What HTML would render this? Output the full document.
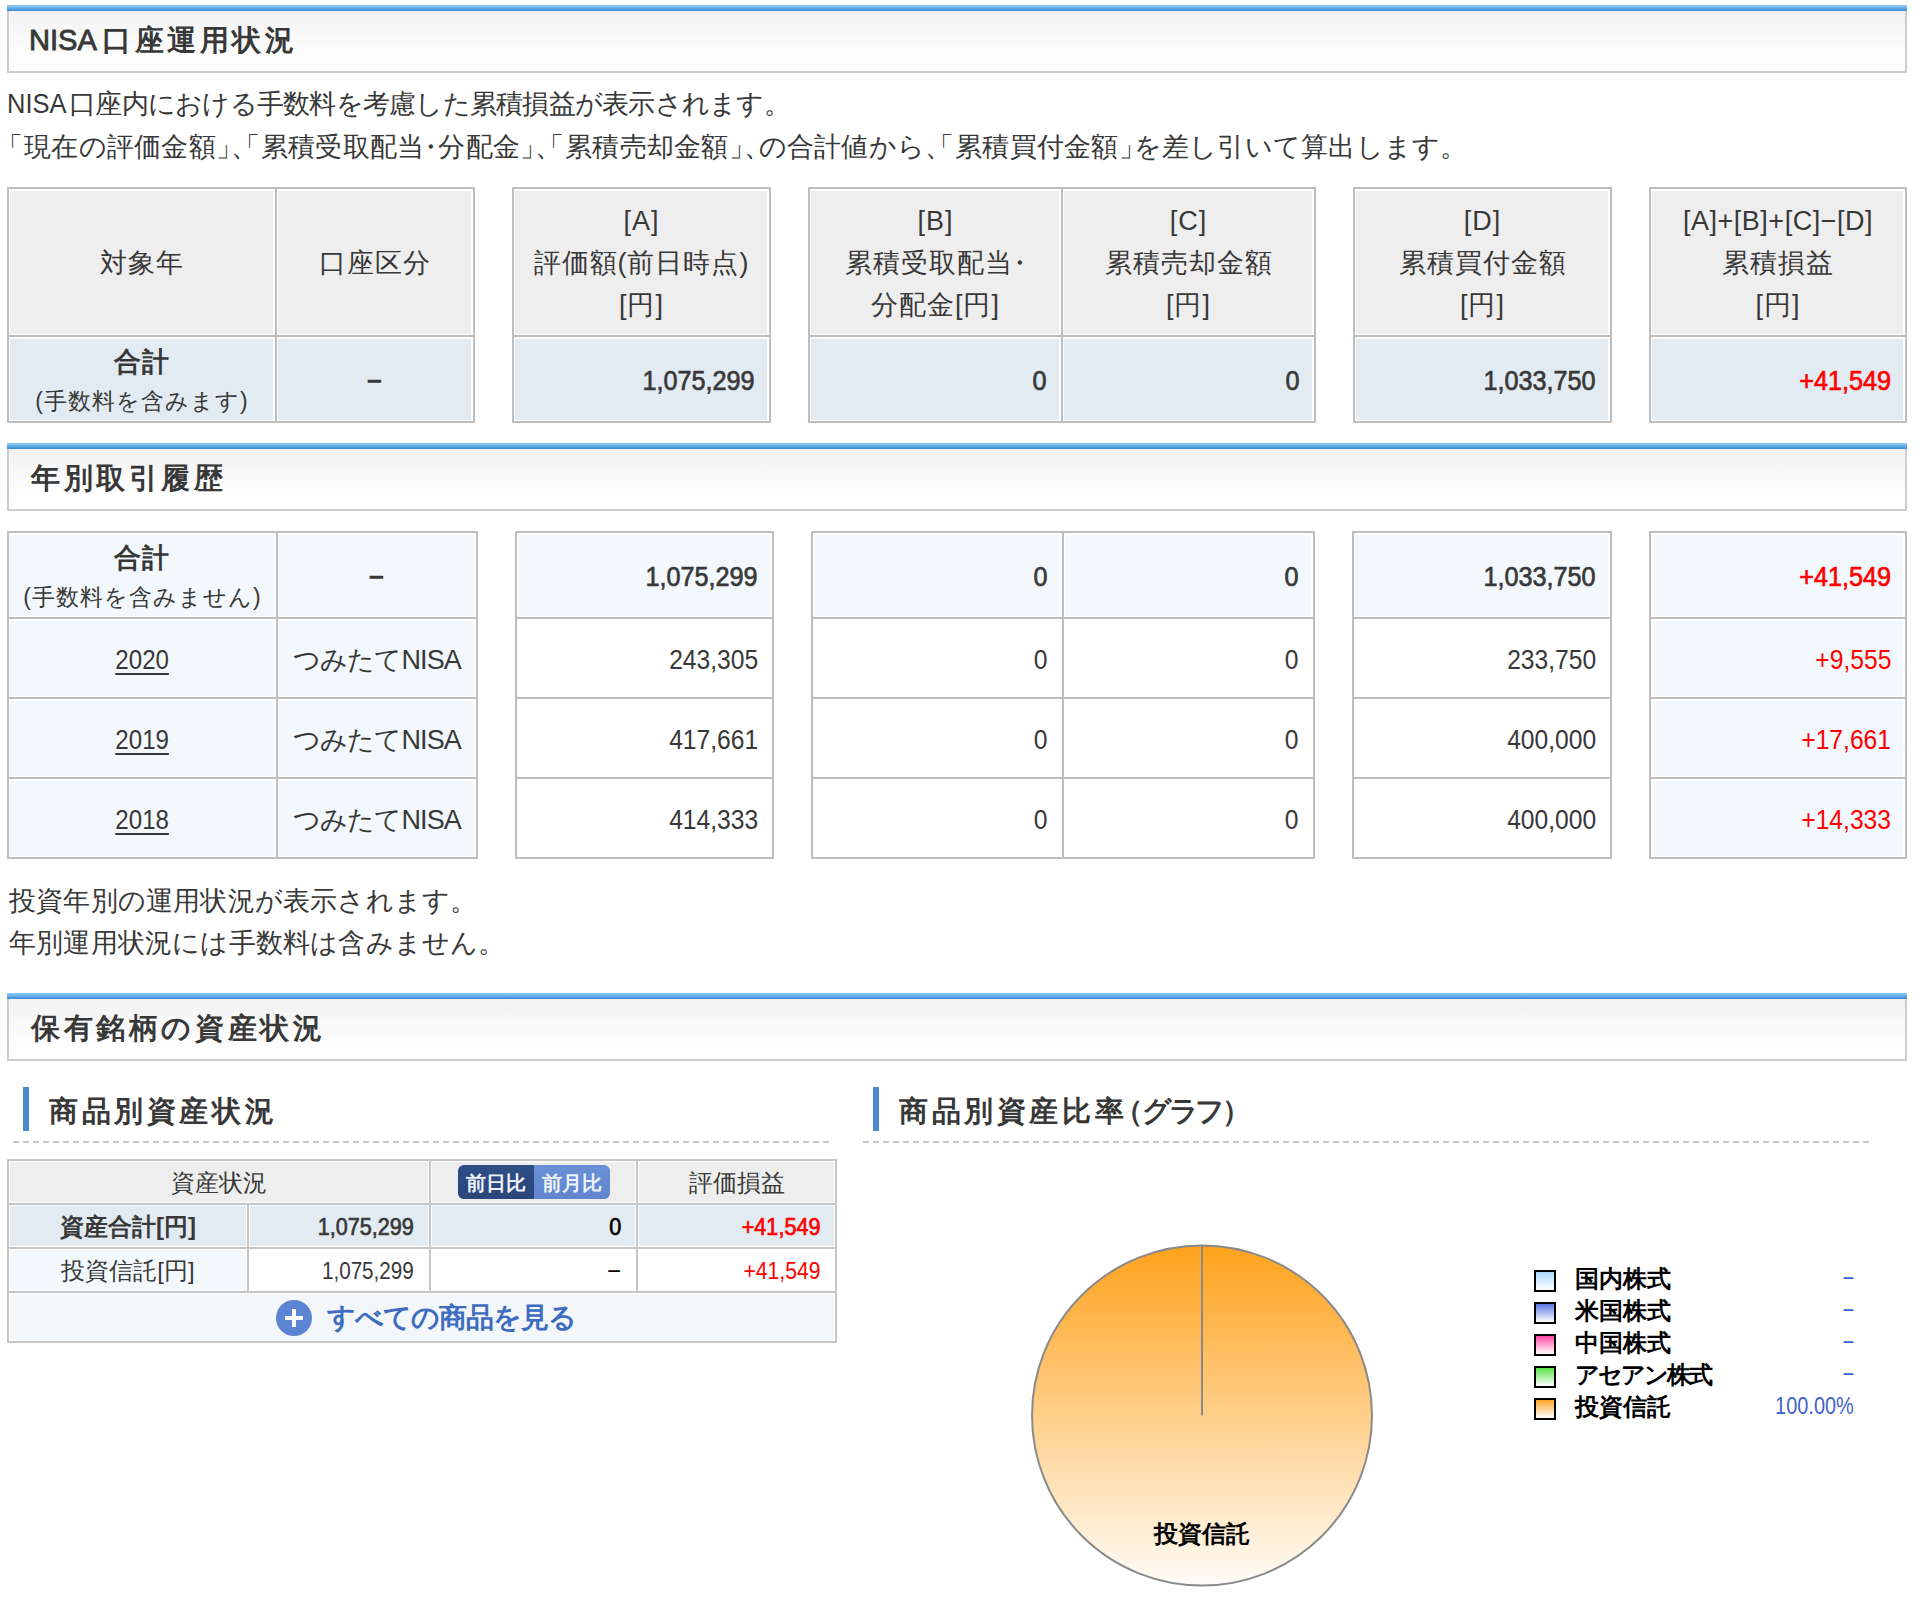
<!DOCTYPE html><html lang="ja"><head><meta charset="utf-8"><title>NISA</title><style>
html,body{margin:0;padding:0;background:#fff;}
body{width:1920px;height:1602px;position:relative;overflow:hidden;font-family:"Liberation Sans",sans-serif;color:#383838;font-size:28px;line-height:42px;}
.a{position:absolute;box-sizing:border-box;white-space:nowrap;}
.hb{position:absolute;left:7px;width:1900px;height:6px;background:linear-gradient(#93cffc,#3a89d4);}
.hx{position:absolute;left:7px;width:1900px;height:62px;box-sizing:border-box;border:2px solid #cdcdcd;border-top:0;background:linear-gradient(#f2f2f2,#fdfdfd 70%,#fff);}
.ht{position:absolute;left:31px;font-size:29px;letter-spacing:3.6px;font-weight:bold;color:#383838;line-height:36px;white-space:nowrap;}
.c{position:absolute;box-sizing:border-box;border:2px solid #bebebe;box-shadow:inset 0 2px 0 #fff,inset -2px 0 0 #fff,inset 1px 0 0 #fff,inset 0 -1px 0 #fff;display:flex;align-items:center;justify-content:center;text-align:center;white-space:nowrap;padding-top:4px;font-size:27px;letter-spacing:1px;}
.c.r{justify-content:flex-end;padding-right:14px;}
.g{background:#eeeeee;}
.c.g{padding-top:2px;}
.b1{background:#e2ebf2;}
.b2{background:#f3f8fc;}
.w{background:#fff;}
.bold{font-weight:bold;}
.red{color:#f00;}
.sm{font-size:23px;letter-spacing:1px;line-height:38px;}
.u{text-decoration:underline;text-underline-offset:4px;text-decoration-thickness:2px;}
.n{display:inline-block;font-size:28px;letter-spacing:0;transform:scaleX(.88);transform-origin:100% 50%;}
.nb{display:inline-block;font-size:28px;letter-spacing:0;transform:scaleX(.90);transform-origin:100% 50%;font-weight:normal;-webkit-text-stroke:0.7px currentColor;}
.nc{display:inline-block;font-size:28px;letter-spacing:0;transform:scaleX(.86);transform-origin:50% 50%;}
.pl{display:inline-block;width:15px;text-indent:-13px;overflow:visible;}
.pr{display:inline-block;width:15px;overflow:visible;}
.pm{display:inline-block;width:14px;text-indent:-7px;overflow:visible;}
.c3{position:absolute;box-sizing:border-box;border:2px solid #c6c6c6;box-shadow:inset 0 0 0 1px #fff;display:flex;align-items:center;justify-content:center;white-space:nowrap;font-size:24px;padding-top:2px;}
.c3.r{justify-content:flex-end;padding-right:15px;}
</style></head><body>
<div class="hb" style="top:5px"></div>
<div class="hx" style="top:11px"></div>
<div class="ht" id="t_h1" style="top:22px;left:29px"><span style="display:inline-block;width:73px;font-size:30px;letter-spacing:0;transform:scaleX(.97);transform-origin:0 50%;font-weight:normal;-webkit-text-stroke:0.9px currentColor">NISA</span>口座運用状況</div>
<div class="a" id="t_p1" style="left:7px;top:83px;font-size:27px;letter-spacing:-0.75px"><span style="display:inline-block;width:62px;font-size:28px;letter-spacing:0;transform:scaleX(.91);transform-origin:0 50%">NISA</span>口座内における手数料を考慮した累積損益が表示されます<span class="pr">。</span></div>
<div class="a" id="t_p2" style="left:9px;top:126px;font-size:27px;letter-spacing:0.25px"><span class="pl">「</span>現在の評価金額<span class="pr">」</span><span class="pr">、</span><span class="pl">「</span>累積受取配当<span class="pm">・</span>分配金<span class="pr">」</span><span class="pr">、</span><span class="pl">「</span>累積売却金額<span class="pr">」</span><span class="pr">、</span>の合計値から<span class="pr">、</span><span class="pl">「</span>累積買付金額<span class="pr">」</span>を差し引いて算出します<span class="pr">。</span></div>
<div class="c g" style="left:7px;top:187px;width:270px;height:150px;"><div id="t_c1">対象年</div></div>
<div class="c g" style="left:275px;top:187px;width:200px;height:150px;"><div id="t_c2">口座区分</div></div>
<div class="c g" style="left:512px;top:187px;width:259px;height:150px;"><div id="t_c3">[A]<br>評価額(前日時点)<br>[円]</div></div>
<div class="c g" style="left:808px;top:187px;width:255px;height:150px;"><div id="t_c4">[B]<br>累積受取配当<span class="pm">・</span><br>分配金[円]</div></div>
<div class="c g" style="left:1061px;top:187px;width:255px;height:150px;"><div id="t_c5">[C]<br>累積売却金額<br>[円]</div></div>
<div class="c g" style="left:1353px;top:187px;width:259px;height:150px;"><div id="t_c6">[D]<br>累積買付金額<br>[円]</div></div>
<div class="c g" style="left:1649px;top:187px;width:258px;height:150px;"><div id="t_c7"><span style="letter-spacing:0.5px">[A]+[B]+[C]−[D]</span><br>累積損益<br>[円]</div></div>
<div class="c b1" style="left:7px;top:335px;width:270px;height:88px;padding-top:6px"><div id="t_c8"><div class="bold" style="line-height:38px">合計</div><div class="sm" style="line-height:40px">(手数料を含みます)</div></div></div>
<div class="c b1 bold" style="left:275px;top:335px;width:200px;height:88px;"><div id="t_c9">−</div></div>
<div class="c b1 r bold" style="left:512px;top:335px;width:259px;height:88px;"><div id="t_c10"><span class="nb">1,075,299</span></div></div>
<div class="c b1 r bold" style="left:808px;top:335px;width:255px;height:88px;"><div id="t_c11"><span class="nb">0</span></div></div>
<div class="c b1 r bold" style="left:1061px;top:335px;width:255px;height:88px;"><div id="t_c12"><span class="nb">0</span></div></div>
<div class="c b1 r bold" style="left:1353px;top:335px;width:259px;height:88px;"><div id="t_c13"><span class="nb">1,033,750</span></div></div>
<div class="c b1 r bold red" style="left:1649px;top:335px;width:258px;height:88px;"><div id="t_c14"><span class="nb">+41,549</span></div></div>
<div class="hb" style="top:443px"></div>
<div class="hx" style="top:449px"></div>
<div class="ht" id="t_h2" style="top:460px;left:31px">年別取引履歴</div>
<div class="c b2" style="left:7px;top:531px;width:271px;height:88px;padding-top:6px"><div id="t_c15"><div class="bold" style="line-height:38px">合計</div><div class="sm" style="line-height:40px">(手数料を含みません)</div></div></div>
<div class="c b2 bold" style="left:276px;top:531px;width:202px;height:88px;"><div id="t_c16">−</div></div>
<div class="c b2 r bold" style="left:515px;top:531px;width:259px;height:88px;"><div id="t_c17"><span class="nb">1,075,299</span></div></div>
<div class="c b2 r bold" style="left:811px;top:531px;width:253px;height:88px;"><div id="t_c18"><span class="nb">0</span></div></div>
<div class="c b2 r bold" style="left:1062px;top:531px;width:253px;height:88px;"><div id="t_c19"><span class="nb">0</span></div></div>
<div class="c b2 r bold" style="left:1352px;top:531px;width:260px;height:88px;"><div id="t_c20"><span class="nb">1,033,750</span></div></div>
<div class="c b2 r bold red" style="left:1649px;top:531px;width:258px;height:88px;"><div id="t_c21"><span class="nb">+41,549</span></div></div>
<div class="c b2" style="left:7px;top:617px;width:271px;height:82px;"><div id="t_c22"><span class="nc u">2020</span></div></div>
<div class="c b2" style="left:276px;top:617px;width:202px;height:82px;"><div id="t_c23"><span style="letter-spacing:-0.9px">つみたてNISA</span></div></div>
<div class="c w r" style="left:515px;top:617px;width:259px;height:82px;"><div id="t_c24"><span class="n">243,305</span></div></div>
<div class="c w r" style="left:811px;top:617px;width:253px;height:82px;"><div id="t_c25"><span class="n">0</span></div></div>
<div class="c w r" style="left:1062px;top:617px;width:253px;height:82px;"><div id="t_c26"><span class="n">0</span></div></div>
<div class="c w r" style="left:1352px;top:617px;width:260px;height:82px;"><div id="t_c27"><span class="n">233,750</span></div></div>
<div class="c b2 r red" style="left:1649px;top:617px;width:258px;height:82px;"><div id="t_c28"><span class="n">+9,555</span></div></div>
<div class="c b2" style="left:7px;top:697px;width:271px;height:82px;"><div id="t_c29"><span class="nc u">2019</span></div></div>
<div class="c b2" style="left:276px;top:697px;width:202px;height:82px;"><div id="t_c30"><span style="letter-spacing:-0.9px">つみたてNISA</span></div></div>
<div class="c w r" style="left:515px;top:697px;width:259px;height:82px;"><div id="t_c31"><span class="n">417,661</span></div></div>
<div class="c w r" style="left:811px;top:697px;width:253px;height:82px;"><div id="t_c32"><span class="n">0</span></div></div>
<div class="c w r" style="left:1062px;top:697px;width:253px;height:82px;"><div id="t_c33"><span class="n">0</span></div></div>
<div class="c w r" style="left:1352px;top:697px;width:260px;height:82px;"><div id="t_c34"><span class="n">400,000</span></div></div>
<div class="c b2 r red" style="left:1649px;top:697px;width:258px;height:82px;"><div id="t_c35"><span class="n">+17,661</span></div></div>
<div class="c b2" style="left:7px;top:777px;width:271px;height:82px;"><div id="t_c36"><span class="nc u">2018</span></div></div>
<div class="c b2" style="left:276px;top:777px;width:202px;height:82px;"><div id="t_c37"><span style="letter-spacing:-0.9px">つみたてNISA</span></div></div>
<div class="c w r" style="left:515px;top:777px;width:259px;height:82px;"><div id="t_c38"><span class="n">414,333</span></div></div>
<div class="c w r" style="left:811px;top:777px;width:253px;height:82px;"><div id="t_c39"><span class="n">0</span></div></div>
<div class="c w r" style="left:1062px;top:777px;width:253px;height:82px;"><div id="t_c40"><span class="n">0</span></div></div>
<div class="c w r" style="left:1352px;top:777px;width:260px;height:82px;"><div id="t_c41"><span class="n">400,000</span></div></div>
<div class="c b2 r red" style="left:1649px;top:777px;width:258px;height:82px;"><div id="t_c42"><span class="n">+14,333</span></div></div>
<div class="a" id="t_p3" style="left:9px;top:880px;font-size:27px;letter-spacing:0.2px">投資年別の運用状況が表示されます<span class="pr">。</span></div>
<div class="a" id="t_p4" style="left:9px;top:922px;font-size:27px;letter-spacing:0.2px">年別運用状況には手数料は含みません<span class="pr">。</span></div>
<div class="hb" style="top:993px"></div>
<div class="hx" style="top:999px"></div>
<div class="ht" id="t_h3" style="top:1010px;left:31px">保有銘柄の資産状況</div>
<div class="a" style="left:23px;top:1087px;width:6px;height:44px;background:#4a8cc9"></div>
<div class="ht" id="t_s1" style="left:49px;top:1093px">商品別資産状況</div>
<div class="a" style="left:13px;top:1141px;width:818px;height:2px;background:repeating-linear-gradient(90deg,#c8c8c8 0 6px,transparent 6px 10px)"></div>
<div class="a" style="left:873px;top:1087px;width:6px;height:44px;background:#4a8cc9"></div>
<div class="ht" id="t_s2" style="left:899px;top:1093px">商品別資産比率<span class="pl">（</span><span style="letter-spacing:-3.5px">グラフ</span><span class="pr">）</span></div>
<div class="a" style="left:863px;top:1141px;width:1008px;height:2px;background:repeating-linear-gradient(90deg,#c8c8c8 0 6px,transparent 6px 10px)"></div>
<div class="c3 g" style="left:7px;top:1159px;width:424px;height:46px;"><div id="t_a1">資産状況</div></div>
<div class="c3 g" style="left:429px;top:1159px;width:209px;height:46px;"><div id="t_a2"><div style="display:flex;border-radius:6px;overflow:hidden;height:34px;font-size:20px;font-weight:bold;line-height:36px;color:#eef2f8;margin-top:-2px;box-shadow:inset 0 -2px 0 rgba(0,0,0,.15)"><span style="background:linear-gradient(#2f4e86,#2a467a);width:76px;text-align:center">前日比</span><span style="background:linear-gradient(#6a91d8,#5f85cc);width:76px;text-align:center">前月比</span></div></div></div>
<div class="c3 g" style="left:636px;top:1159px;width:201px;height:46px;"><div id="t_a3">評価損益</div></div>
<div class="c3 b1 bold" style="left:7px;top:1203px;width:242px;height:46px;"><div id="t_a4">資産合計[円]</div></div>
<div class="c3 b1 r bold" style="left:247px;top:1203px;width:184px;height:46px;"><div id="t_a5"><span class="nb" style="font-size:24px">1,075,299</span></div></div>
<div class="c3 b1 r bold" style="left:429px;top:1203px;width:209px;height:46px;color:#000"><div id="t_a6"><span class="nb" style="font-size:24px">0</span></div></div>
<div class="c3 b1 r bold red" style="left:636px;top:1203px;width:201px;height:46px;"><div id="t_a7"><span class="nb" style="font-size:24px">+41,549</span></div></div>
<div class="c3 b2" style="left:7px;top:1247px;width:242px;height:46px;"><div id="t_a8">投資信託[円]</div></div>
<div class="c3 w r" style="left:247px;top:1247px;width:184px;height:46px;"><div id="t_a9"><span class="n" style="font-size:24px;transform:scaleX(.86)">1,075,299</span></div></div>
<div class="c3 w r" style="left:429px;top:1247px;width:209px;height:46px;color:#000"><div id="t_a10">−</div></div>
<div class="c3 w r red" style="left:636px;top:1247px;width:201px;height:46px;"><div id="t_a11"><span class="n" style="font-size:24px">+41,549</span></div></div>
<div class="c3 " style="left:7px;top:1291px;width:830px;height:52px;background:#f3f7fa"><div id="t_a12"><div style="display:flex;align-items:center;color:#3d6cc0;font-weight:bold;font-size:28px"><span style="display:inline-block;width:36px;height:36px;border-radius:50%;background:#5b84d2;position:relative;margin-right:15px;margin-left:8px"><span style="position:absolute;left:9px;top:16px;width:18px;height:4px;background:#fff"></span><span style="position:absolute;left:16px;top:9px;width:4px;height:18px;background:#fff"></span></span><span style="letter-spacing:-1px">すべての商品を見る</span></div></div></div>
<svg class="a" style="left:1020px;top:1235px" width="370" height="362" viewBox="1020 1235 370 362">
<defs><linearGradient id="pg" x1="0" y1="0" x2="0" y2="1"><stop offset="0" stop-color="#ffa21c"/><stop offset="1" stop-color="#fffcf8"/></linearGradient></defs>
<circle cx="1202" cy="1415.5" r="170" fill="url(#pg)" stroke="#8a8a8a" stroke-width="2"/>
<line x1="1202" y1="1245.5" x2="1202" y2="1415.5" stroke="#8a8a8a" stroke-width="2"/>
</svg>
<div class="a" id="t_pie" style="left:1102px;top:1517px;width:200px;text-align:center;font-size:24px;line-height:34px;font-weight:bold;color:#000">投資信託</div>
<div class="a" style="left:1534px;top:1270px;width:22px;height:22px;border:2px solid #000;background:linear-gradient(#a9dbff,#fff)"></div>
<div class="a" id="t_l0" style="left:1575px;top:1262px;font-size:24px;line-height:34px;font-weight:bold;color:#000">国内株式</div>
<div class="a" id="t_v0" style="left:1654px;top:1261px;width:200px;text-align:right;font-size:24px;line-height:34px;color:#3f5fd0"><span class="n" style="font-size:24px;transform:scaleX(.83)">−</span></div>
<div class="a" style="left:1534px;top:1302px;width:22px;height:22px;border:2px solid #000;background:linear-gradient(#5b76e0,#fff)"></div>
<div class="a" id="t_l1" style="left:1575px;top:1294px;font-size:24px;line-height:34px;font-weight:bold;color:#000">米国株式</div>
<div class="a" id="t_v1" style="left:1654px;top:1293px;width:200px;text-align:right;font-size:24px;line-height:34px;color:#3f5fd0"><span class="n" style="font-size:24px;transform:scaleX(.83)">−</span></div>
<div class="a" style="left:1534px;top:1334px;width:22px;height:22px;border:2px solid #000;background:linear-gradient(#ff4aa6,#fff)"></div>
<div class="a" id="t_l2" style="left:1575px;top:1326px;font-size:24px;line-height:34px;font-weight:bold;color:#000">中国株式</div>
<div class="a" id="t_v2" style="left:1654px;top:1325px;width:200px;text-align:right;font-size:24px;line-height:34px;color:#3f5fd0"><span class="n" style="font-size:24px;transform:scaleX(.83)">−</span></div>
<div class="a" style="left:1534px;top:1366px;width:22px;height:22px;border:2px solid #000;background:linear-gradient(#58e34a,#fff)"></div>
<div class="a" id="t_l3" style="left:1575px;top:1358px;letter-spacing:-2px;font-size:24px;line-height:34px;font-weight:bold;color:#000">アセアン株式</div>
<div class="a" id="t_v3" style="left:1654px;top:1357px;width:200px;text-align:right;font-size:24px;line-height:34px;color:#3f5fd0"><span class="n" style="font-size:24px;transform:scaleX(.83)">−</span></div>
<div class="a" style="left:1534px;top:1398px;width:22px;height:22px;border:2px solid #000;background:linear-gradient(#ffa52a,#fff)"></div>
<div class="a" id="t_l4" style="left:1575px;top:1390px;font-size:24px;line-height:34px;font-weight:bold;color:#000">投資信託</div>
<div class="a" id="t_v4" style="left:1654px;top:1389px;width:200px;text-align:right;font-size:24px;line-height:34px;color:#3f5fd0"><span class="n" style="font-size:24px;transform:scaleX(.83)">100.00%</span></div>
</body></html>
